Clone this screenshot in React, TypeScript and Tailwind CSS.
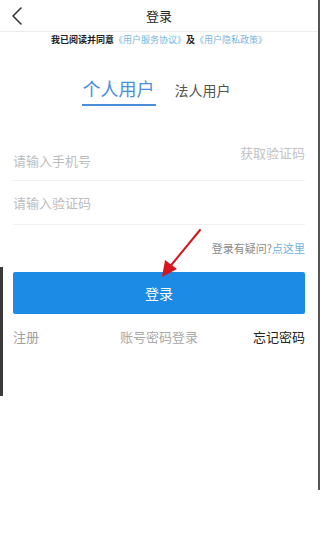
import React from "react";

/**
 * Login page (phone + verification code)
 */
export default function App() {
  return (
    <main
      className="relative w-[320px] h-[545px] bg-white overflow-hidden"
      style={{ fontFamily: '"Noto Sans CJK SC", "Noto Sans", sans-serif' }}
    >
      {/* phone edges */}
      <div className="absolute left-0 top-[267px] w-[3px] h-[129px] bg-[#3a3a3a]" />
      <div className="absolute right-0 top-0 w-[2px] h-[490px] bg-[#555]" />

      {/* header */}
      <header className="relative h-[32px] mr-[2px] flex items-center justify-center border-b border-[#ececec]">
        <button className="absolute left-[8px] top-[6px] w-[18px] h-[20px] flex items-center justify-center">
          <svg width="12" height="18" viewBox="0 0 12 18" fill="none">
            <path d="M10 1L2 9l8 8" stroke="#333" strokeWidth="1.6" strokeLinecap="round" strokeLinejoin="round" />
          </svg>
        </button>
        <h1 className="text-[13px] text-[#222]">登录</h1>
      </header>

      {/* agreement */}
      <p className="mt-[1px] mr-[2px] text-center text-[9px] leading-[14px] font-bold text-[#222]">
        我已阅读并同意
        <span className="font-normal text-[#79b4e0]">《用户服务协议》</span>
        及
        <span className="font-normal text-[#79b4e0]">《用户隐私政策》</span>
      </p>

      {/* tabs */}
      <div className="mt-[29px] mr-[2px] flex items-end justify-center gap-[19px] pr-[6px]">
        <div className="flex flex-col items-center">
          <span className="text-[18px] leading-[24px] text-[#4a8edb]">个人用户</span>
          <span className="mt-[4px] w-[74px] h-[2px] bg-[#4a8edb]" />
        </div>
        <span className="mb-[6px] text-[14px] leading-[20px] text-[#555]">法人用户</span>
      </div>

      {/* form */}
      <div className="mt-[35px] ml-[13px] mr-[15px]">
        <div className="h-[40px] flex justify-between border-b border-[#f0f0f0]">
          <span className="mt-[10px] text-[13px] leading-[20px] text-[#bdbdbd]">请输入手机号</span>
          <span className="mt-[2px] text-[13px] leading-[20px] text-[#c2c2c2]">获取验证码</span>
        </div>
        <div className="h-[44px] flex items-center border-b border-[#f0f0f0]">
          <span className="text-[13px] leading-[20px] text-[#bdbdbd]">请输入验证码</span>
        </div>
        <p className="mt-[15px] text-right text-[11px] leading-[16px] text-[#8a8a8a]">
          登录有疑问?<span className="text-[#6fb0e0]">点这里</span>
        </p>

        <button className="mt-[16px] w-full h-[42px] rounded-[2px] bg-[#1b8be6] text-white text-[14px]">
          登录
        </button>

        <div className="mt-[14px] flex items-center justify-between text-[13px] leading-[18px]">
          <span className="text-[#a0a0a0]">注册</span>
          <span className="ml-[26px] text-[#a8a8a8]">账号密码登录</span>
          <span className="text-[#222]">忘记密码</span>
        </div>
      </div>

      {/* red annotation arrow */}
      <svg className="absolute left-[155px] top-[225px]" width="52" height="56" viewBox="0 0 52 56">
        <line x1="45" y1="5" x2="13" y2="44" stroke="#d7151f" strokeWidth="2" strokeLinecap="round" />
        <path d="M7 52L10 35L22 44Z" fill="#d7151f" />
      </svg>
    </main>
  );
}
